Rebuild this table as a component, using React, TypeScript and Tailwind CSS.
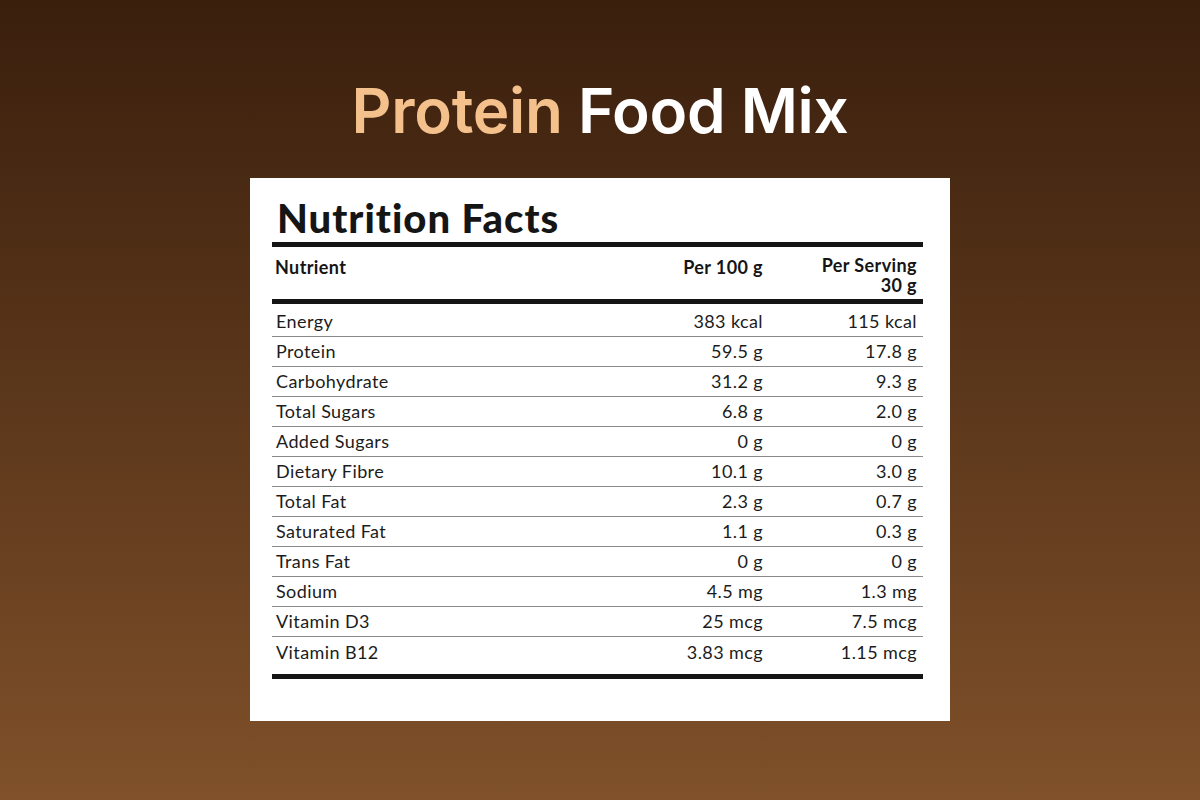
import React from 'react'

interface Row {
  name: string
  per100: string
  perServing: string
}

const rows: Row[] = [
  { name: 'Energy', per100: '383 kcal', perServing: '115 kcal' },
  { name: 'Protein', per100: '59.5 g', perServing: '17.8 g' },
  { name: 'Carbohydrate', per100: '31.2 g', perServing: '9.3 g' },
  { name: 'Total Sugars', per100: '6.8 g', perServing: '2.0 g' },
  { name: 'Added Sugars', per100: '0 g', perServing: '0 g' },
  { name: 'Dietary Fibre', per100: '10.1 g', perServing: '3.0 g' },
  { name: 'Total Fat', per100: '2.3 g', perServing: '0.7 g' },
  { name: 'Saturated Fat', per100: '1.1 g', perServing: '0.3 g' },
  { name: 'Trans Fat', per100: '0 g', perServing: '0 g' },
  { name: 'Sodium', per100: '4.5 mg', perServing: '1.3 mg' },
  { name: 'Vitamin D3', per100: '25 mcg', perServing: '7.5 mcg' },
  { name: 'Vitamin B12', per100: '3.83 mcg', perServing: '1.15 mcg' },
]

export default function App() {
  return (
    <div className="w-[1200px] h-[800px] bg-gradient-to-b from-[#3a1f0d] to-[#80512a] flex flex-col items-center font-['Lato',sans-serif]">
      {/* Heading */}
      <h1 className="mt-[72px] h-[78px] text-[62px] leading-[78px] font-semibold tracking-[-0.3px] font-['Inter',sans-serif]">
        <span className="text-[#f4c18c]">Protein</span>{' '}
        <span className="text-white">Food Mix</span>
      </h1>

      {/* Card */}
      <div className="mt-[28px] w-[700px] bg-white pl-[22px] pr-[27px] pt-[16px] pb-[42px]">
        <h2 className="h-[48px] pl-[5px] text-[40px] leading-[48px] font-black text-[#151515] tracking-[1px]">
          Nutrition Facts
        </h2>
        <div className="h-[5px] bg-[#151515]" />

        {/* Column headers */}
        <div className="grid grid-cols-[1fr_160px_154px] pt-[8px] pb-[4px] text-[18px] leading-[20px] font-bold tracking-[0.4px] text-[#151515]">
          <div className="pl-[3px] pt-[2px]">Nutrient</div>
          <div className="pr-[6px] pt-[2px] text-right">Per 100 g</div>
          <div className="pr-[6px] text-right">
            Per Serving
            <br />
            30 g
          </div>
        </div>
        <div className="h-[5px] bg-[#151515]" />

        {/* Rows */}
        {rows.map((row, i) => (
          <div
            key={row.name}
            className={`grid grid-cols-[1fr_160px_154px] items-center text-[18px] tracking-[0.4px] text-[#1c1c1c] ${
              i === 0 ? 'h-[33px] pt-[2px]' : 'h-[30px]'
            } ${i < rows.length - 1 ? 'border-b border-[#8a8a8a]' : ''}`}
          >
            <div className="pl-[4px]">{row.name}</div>
            <div className="pr-[6px] text-right">{row.per100}</div>
            <div className="pr-[6px] text-right">{row.perServing}</div>
          </div>
        ))}

        <div className="mt-[7px] h-[5px] bg-[#151515]" />
      </div>
    </div>
  )
}
